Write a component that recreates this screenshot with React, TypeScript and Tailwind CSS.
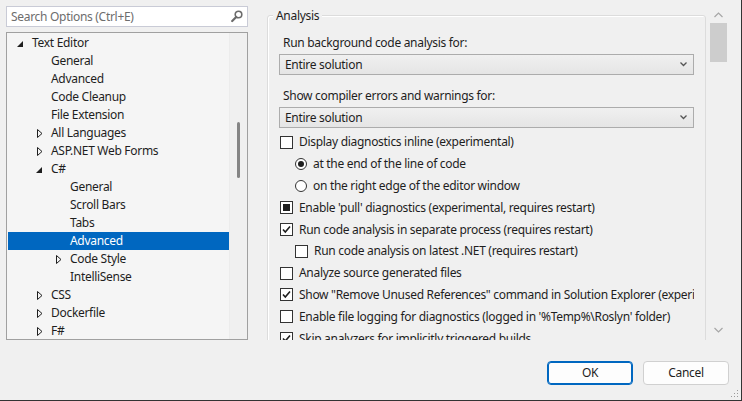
import React from "react";

type TreeNode = { label: string; level: number; arrow?: "open" | "closed"; selected?: boolean };

const tree: TreeNode[] = [
  { label: "Text Editor", level: 0, arrow: "open" },
  { label: "General", level: 1 },
  { label: "Advanced", level: 1 },
  { label: "Code Cleanup", level: 1 },
  { label: "File Extension", level: 1 },
  { label: "All Languages", level: 1, arrow: "closed" },
  { label: "ASP.NET Web Forms", level: 1, arrow: "closed" },
  { label: "C#", level: 1, arrow: "open" },
  { label: "General", level: 2 },
  { label: "Scroll Bars", level: 2 },
  { label: "Tabs", level: 2 },
  { label: "Advanced", level: 2, selected: true },
  { label: "Code Style", level: 2, arrow: "closed" },
  { label: "IntelliSense", level: 2 },
  { label: "CSS", level: 1, arrow: "closed" },
  { label: "Dockerfile", level: 1, arrow: "closed" },
  { label: "F#", level: 1, arrow: "closed" },
];

const indent = ["pl-[8px]", "pl-[27px]", "pl-[46px]"];

type Opt = { kind: "check" | "radio"; state: "on" | "off" | "mixed"; label: string; sub?: boolean };

const options: Opt[] = [
  { kind: "check", state: "off", label: "Display diagnostics inline (experimental)" },
  { kind: "radio", state: "on", label: "at the end of the line of code", sub: true },
  { kind: "radio", state: "off", label: "on the right edge of the editor window", sub: true },
  { kind: "check", state: "mixed", label: "Enable 'pull' diagnostics (experimental, requires restart)" },
  { kind: "check", state: "on", label: "Run code analysis in separate process (requires restart)" },
  { kind: "check", state: "off", label: "Run code analysis on latest .NET (requires restart)", sub: true },
  { kind: "check", state: "off", label: "Analyze source generated files" },
  { kind: "check", state: "on", label: 'Show "Remove Unused References" command in Solution Explorer (experimental)' },
  { kind: "check", state: "off", label: "Enable file logging for diagnostics (logged in '%Temp%\\Roslyn' folder)" },
  { kind: "check", state: "on", label: "Skip analyzers for implicitly triggered builds" },
];

function Arrow({ kind }: { kind?: "open" | "closed" }) {
  if (kind === "open")
    return (
      <svg width="6" height="6" viewBox="0 0 6 6" className="ml-[1px] mt-[2px]">
        <polygon points="6,0 6,6 0,6" fill="#1e1e1e" />
      </svg>
    );
  if (kind === "closed")
    return (
      <svg width="6" height="9" viewBox="0 0 6 9" className="ml-[2px] mt-[1px]">
        <polygon points="0.5,0.5 5,4.5 0.5,8.5" fill="none" stroke="#1e1e1e" />
      </svg>
    );
  return null;
}

function Box({ opt }: { opt: Opt }) {
  if (opt.kind === "radio")
    return (
      <span className="w-[12px] h-[12px] rounded-full border border-[#333] bg-white flex items-center justify-center shrink-0">
        {opt.state === "on" && <span className="w-[6px] h-[6px] rounded-full bg-[#1e1e1e]" />}
      </span>
    );
  return (
    <span className="w-[13px] h-[13px] border border-[#333] bg-white flex items-center justify-center shrink-0">
      {opt.state === "mixed" && <span className="w-[7px] h-[7px] bg-[#1e1e1e]" />}
      {opt.state === "on" && (
        <svg width="11" height="11" viewBox="0 0 11 11">
          <path d="M2 5.5 L4.3 8 L9 2.5" fill="none" stroke="#1e1e1e" strokeWidth="1.6" />
        </svg>
      )}
    </span>
  );
}

function Combo() {
  return (
    <div className="h-[21px] mr-[11px] border border-[#acacac] bg-gradient-to-b from-[#f0f0f0] to-[#e5e5e5] flex items-center pl-[5px] pr-[6px]">
      <span className="flex-1">Entire solution</span>
      <svg width="7" height="5" viewBox="0 0 7 5">
        <path d="M0.5 0.5 L3.5 3.5 L6.5 0.5" fill="none" stroke="#555" strokeWidth="1.3" />
      </svg>
    </div>
  );
}

export default function App() {
  return (
    <div className="w-[742px] h-[401px] bg-[#f0f0f0] border-r border-b border-[#333] flex flex-col text-[12px] tracking-[-0.3px] text-[#1e1e1e] font-['Noto_Sans',sans-serif] overflow-hidden">
      <div className="flex h-[340px] shrink-0">
        {/* left: search + tree */}
        <div className="ml-[6px] mt-[6px] w-[242px] flex flex-col">
          <div className="h-[21px] border border-[#c9cbd6] bg-white flex items-center pl-[4px] pr-[4px]">
            <span className="flex-1 text-[#6d6d6d]">Search Options (Ctrl+E)</span>
            <svg width="12" height="13" viewBox="0 0 12 13">
              <circle cx="7.5" cy="4.5" r="3.3" fill="none" stroke="#6b6b6b" strokeWidth="1.6" />
              <path d="M5.2 7 L1.2 11" stroke="#6b6b6b" strokeWidth="2.2" strokeLinecap="round" />
            </svg>
          </div>
          <div className="mt-[5px] h-[308px] border border-[#a0a0a0] bg-[#f5f5f5] flex">
            <div className="w-[222px] pl-[1px] pt-[1px] flex flex-col">
              {tree.map((n, i) => (
                <div
                  key={i}
                  className={`h-[18px] shrink-0 flex items-center ${indent[n.level]} ${n.selected ? "bg-[#0067c0] text-white" : ""}`}
                >
                  <span className="w-[16px] h-[18px] flex items-center">
                    <Arrow kind={n.arrow} />
                  </span>
                  <span className="whitespace-nowrap">{n.label}</span>
                </div>
              ))}
            </div>
            <div className="flex-1 border-l border-[#ececec] bg-[#f0f0f0] flex justify-center">
              <div className="mt-[89px] w-[3px] h-[56px] bg-[#858585] rounded-full" />
            </div>
          </div>
        </div>

        {/* right: group box */}
        <div className="ml-[19px] w-[439px] h-[340px] overflow-hidden">
          <div className="mt-[15px] relative border border-[#dcdcdc] rounded-[3px] shadow-[inset_1px_1px_0_#ffffff] pb-[20px]">
            <span className="absolute -top-[9px] left-[5px] px-[3px] bg-[#f0f0f0]">Analysis</span>
            <div className="mt-[18px] pl-[15px] h-[18px] flex items-center">Run background code analysis for:</div>
            <div className="mt-[2px] pl-[11px]">
              <Combo />
            </div>
            <div className="mt-[12px] pl-[15px] h-[18px] flex items-center">Show compiler errors and warnings for:</div>
            <div className="mt-[2px] pl-[11px]">
              <Combo />
            </div>
            <div className="mt-[3.5px] flex flex-col">
              {options.map((o, i) => (
                <div
                  key={i}
                  className={`h-[21.8px] flex items-center whitespace-nowrap overflow-hidden mr-[11px] ${o.sub ? "pl-[27px]" : "pl-[12px]"}`}
                >
                  <Box opt={o} />
                  <span className="ml-[6px]">{o.label}</span>
                </div>
              ))}
            </div>
          </div>
        </div>

        {/* right scrollbar */}
        <div className="ml-[3px] mt-[6px] w-[18px] h-[334px] flex flex-col items-center">
          <svg width="9" height="6" viewBox="0 0 9 6" className="mt-[6px]">
            <path d="M0.5 5 L4.5 1 L8.5 5" fill="none" stroke="#a6a6a6" strokeWidth="1.2" />
          </svg>
          <div className="mt-[5px] w-[17px] h-[39px] bg-[#cdcdcd]" />
          <div className="flex-1" />
          <svg width="9" height="6" viewBox="0 0 9 6" className="mb-[7px]">
            <path d="M0.5 1 L4.5 5 L8.5 1" fill="none" stroke="#a6a6a6" strokeWidth="1.2" />
          </svg>
        </div>
      </div>

      {/* buttons */}
      <div className="flex-1 flex items-start justify-end relative">
        <div className="mt-[21px] flex gap-[10px] mr-[12px]">
          <button className="w-[86px] h-[24px] rounded-[4px] border border-[#0067c0] bg-[#fdfdfd] shadow-[inset_0_0_0_1px_#0067c0]">OK</button>
          <button className="w-[86px] h-[24px] rounded-[4px] border border-[#d0d0d0] bg-[#fdfdfd]">Cancel</button>
        </div>
        <svg width="8" height="8" viewBox="0 0 8 8" className="absolute right-[2px] bottom-[2px]">
          <rect x="6" y="0" width="1" height="1" fill="#9a9a9a" />
          <rect x="3" y="3" width="1" height="1" fill="#9a9a9a" />
          <rect x="6" y="3" width="1" height="1" fill="#9a9a9a" />
          <rect x="0" y="6" width="1" height="1" fill="#9a9a9a" />
          <rect x="3" y="6" width="1" height="1" fill="#9a9a9a" />
          <rect x="6" y="6" width="1" height="1" fill="#9a9a9a" />
        </svg>
      </div>
    </div>
  );
}
